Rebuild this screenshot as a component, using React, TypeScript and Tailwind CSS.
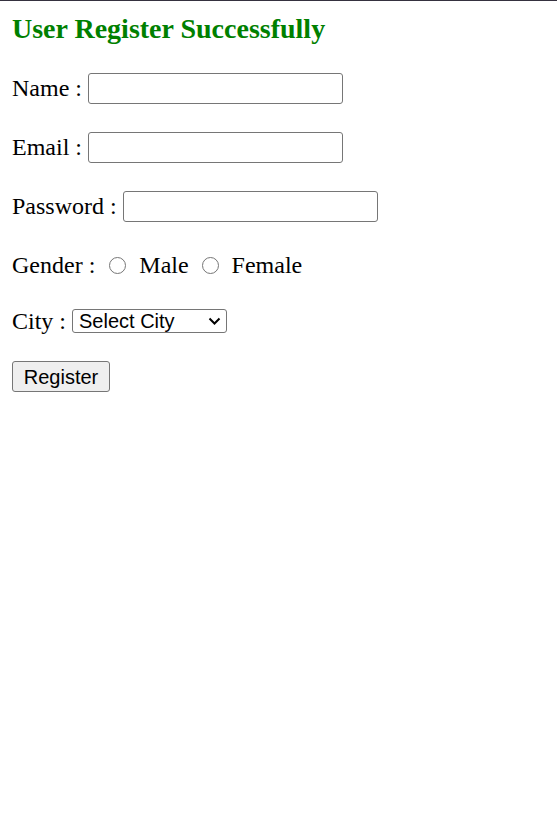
import { useState } from "react";

function Radio({ checked, onClick }: { checked: boolean; onClick: () => void }) {
  return (
    <span
      role="radio"
      aria-checked={checked}
      onClick={onClick}
      className="flex h-[17px] w-[17px] shrink-0 cursor-default items-center justify-center rounded-full border-[1.5px] border-[#767676] bg-white"
    >
      {checked && <span className="h-[9px] w-[9px] rounded-full bg-[#0075ff]" />}
    </span>
  );
}

export default function App() {
  const [gender, setGender] = useState<"male" | "female" | null>(null);
  const [city, setCity] = useState("");

  return (
    <div className="min-h-screen border-t border-[#35313f] bg-white pl-[12px] pt-[12px] font-['Liberation_Serif',serif] text-[24px] text-black">
      {/* Status heading */}
      <h3 className="h-[32px] text-[28px] font-bold leading-[32px] text-[#008000]">
        User Register Successfully
      </h3>

      <form className="flex flex-col" onSubmit={(e) => e.preventDefault()}>
        <div className="mt-[28px] flex h-[31px] items-center gap-[6px]">
          <span className="-mt-[1px]">Name :</span>
          <input
            type="text"
            className="h-[31px] w-[255px] rounded-[3px] border border-[#767676] bg-white px-[3px] font-['Liberation_Sans',sans-serif] text-[20px] outline-none"
          />
        </div>

        <div className="mt-[28px] flex h-[31px] items-center gap-[6px]">
          <span className="-mt-[1px]">Email :</span>
          <input
            type="email"
            className="h-[31px] w-[255px] rounded-[3px] border border-[#767676] bg-white px-[3px] font-['Liberation_Sans',sans-serif] text-[20px] outline-none"
          />
        </div>

        <div className="mt-[28px] flex h-[31px] items-center gap-[6px]">
          <span className="-mt-[1px]">Password :</span>
          <input
            type="password"
            className="h-[31px] w-[255px] rounded-[3px] border border-[#767676] bg-white px-[3px] font-['Liberation_Sans',sans-serif] text-[20px] outline-none"
          />
        </div>

        <div className="mt-[28px] flex h-[31px] items-center">
          <span className="-mt-[1px]">Gender :</span>
          <span className="ml-[14px]">
            <Radio checked={gender === "male"} onClick={() => setGender("male")} />
          </span>
          <span className="-mt-[1px] ml-[13px]">Male</span>
          <span className="ml-[13px]">
            <Radio checked={gender === "female"} onClick={() => setGender("female")} />
          </span>
          <span className="-mt-[1px] ml-[13px]">Female</span>
        </div>

        <div className="mt-[28px] flex h-[24px] items-center gap-[6px]">
          <span>City :</span>
          <div className="relative h-[24px] w-[155px]">
            <select
              value={city}
              onChange={(e) => setCity(e.target.value)}
              className="block h-[24px] w-[155px] appearance-none rounded-[3px] border border-[#767676] bg-white pl-[6px] font-['Liberation_Sans',sans-serif] text-[20px] leading-[22px] text-black outline-none"
            >
              <option value="">Select City</option>
              <option value="delhi">Delhi</option>
              <option value="mumbai">Mumbai</option>
              <option value="pune">Pune</option>
            </select>
            <svg
              className="pointer-events-none absolute right-[6px] top-[8px]"
              width="13"
              height="8"
              viewBox="0 0 13 8"
              fill="none"
            >
              <path d="M1.5 1.5L6.5 6.5L11.5 1.5" stroke="#000" strokeWidth="2" />
            </svg>
          </div>
        </div>

        <div className="mt-[28px] flex h-[31px] items-center">
          <button
            type="submit"
            className="h-[31px] w-[98px] rounded-[3px] border border-[#767676] bg-[#efefef] font-['Liberation_Sans',sans-serif] text-[20px] leading-none text-black"
          >
            Register
          </button>
        </div>
      </form>
    </div>
  );
}
